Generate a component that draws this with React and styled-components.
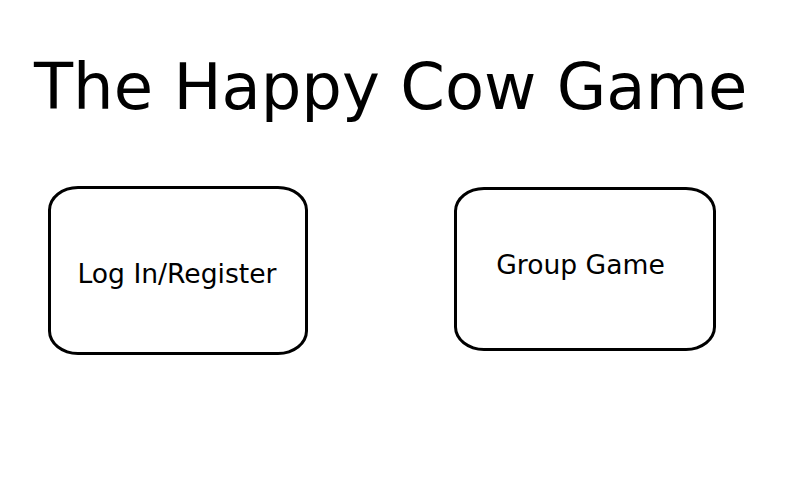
import React from 'react';
import styled, { createGlobalStyle } from 'styled-components';

const GlobalStyle = createGlobalStyle`
    body {
        margin: 0;
        background: #fff;
        font-family: "DejaVu Sans", sans-serif;
        color: #000;
    }
`;

const Page = styled.div`
    width: 798px;
    height: 487px;
    box-sizing: border-box;
    padding: 50px 0 0 34px;
`;

const Title = styled.h1`
    margin: 0;
    font-size: 64px;
    font-weight: normal;
    line-height: 75px;
`;

const Options = styled.div`
    display: flex;
    align-items: flex-start;
    gap: 146px;
    margin-top: 61px;
    padding-left: 14px;
`;

const OptionBox = styled.button`
    display: flex;
    align-items: center;
    justify-content: center;
    box-sizing: border-box;
    width: ${p => p.$w}px;
    height: ${p => p.$h}px;
    margin-top: ${p => p.$top || 0}px;
    padding: ${p => p.$drop || 0}px ${p => p.$shift || 0}px ${p => p.$lift || 0}px 0;
    border: 3px solid #000;
    border-radius: 30px / 24px;
    background: #fff;
    font-family: "DejaVu Sans", sans-serif;
    font-size: 26.6px;
    color: #000;
    cursor: pointer;
`;

const App = () => {
    return (
        <Page>
            <GlobalStyle />
            <Title>The Happy Cow Game</Title>
            <Options>
                <OptionBox $w={260} $h={169} $drop={5} $shift={2}>Log In/Register</OptionBox>
                <OptionBox $w={262} $h={164} $top={1} $lift={10} $shift={9}>Group Game</OptionBox>
            </Options>
        </Page>
    );
};

export default App;
